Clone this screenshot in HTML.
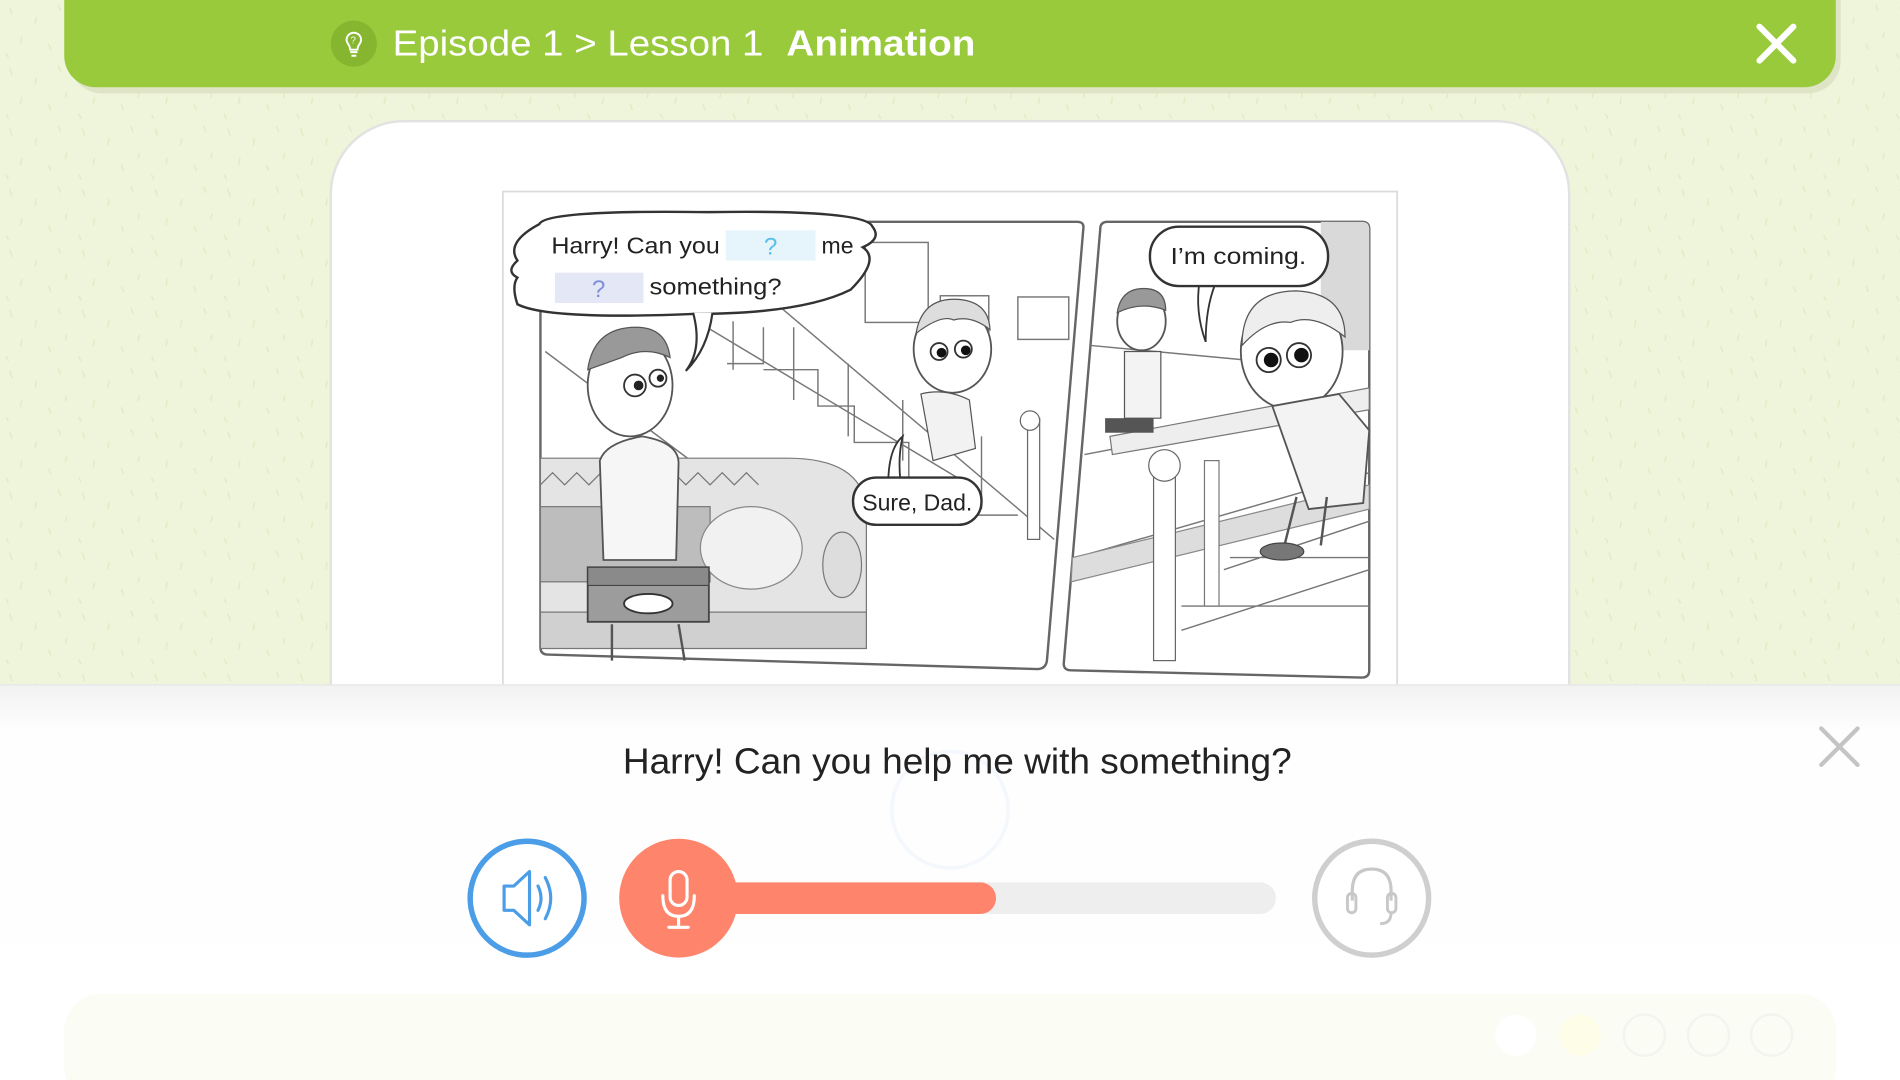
<!DOCTYPE html>
<html><head><meta charset="utf-8">
<style>
html,body{margin:0;padding:0;width:1900px;height:1080px;overflow:hidden;background:#eff5da;}
svg{display:block}
text{font-family:"Liberation Sans",sans-serif}
</style></head>
<body>
<svg width="1900" height="1080" viewBox="0 0 1568 891" preserveAspectRatio="none" xmlns="http://www.w3.org/2000/svg">
<defs>
<pattern id="tex" width="60" height="50" patternUnits="userSpaceOnUse">
<rect width="60" height="50" fill="#eff5da"/>
<path d="M8 6l2 6M30 14l-1 6M48 4l2 5M18 30l-1 6M40 36l2 5M55 26l-1 5M5 44l2 4" stroke="#e2ebc3" stroke-width="1.2"/>
</pattern>
<linearGradient id="ov" x1="0" y1="0" x2="0" y2="1">
<stop offset="0" stop-color="#f2f2f2"/><stop offset="0.12" stop-color="#fefefe"/><stop offset="1" stop-color="#ffffff"/>
</linearGradient>
</defs>
<rect width="1568" height="891" fill="url(#tex)"/>
<!-- header -->
<path d="M57 0H1519V50a27 27 0 0 1-27 27H84a27 27 0 0 1-27-27z" fill="#dfe4c6"/>
<path d="M53 0H1515V46a26 26 0 0 1-26 26H79a26 26 0 0 1-26-26z" fill="#99ca3c"/>
<circle cx="292" cy="36" r="19" fill="#86b52f"/>
<path d="M286 33a6 6 0 1 1 12 0c0 3-3 4-3 8h-6c0-4-3-5-3-8z M289 43h6 M290 46h4" fill="none" stroke="#fff" stroke-width="1.6"/>
<text x="291.5" y="36" font-size="8" fill="#fff" text-anchor="middle">?</text>
<text x="324" y="46" font-size="30" fill="#fff" textLength="306" lengthAdjust="spacingAndGlyphs">Episode 1 &gt; Lesson 1</text>
<text x="649" y="46" font-size="30" fill="#fff" font-weight="bold" textLength="156" lengthAdjust="spacingAndGlyphs">Animation</text>
<path d="M1452 22l28 28M1480 22l-28 28" stroke="#fff" stroke-width="5" stroke-linecap="round"/>
<!-- card -->
<path d="M273 891V160a60 60 0 0 1 60-60H1235a60 60 0 0 1 60 60V891z" fill="#fff" stroke="#e2e2e2" stroke-width="2"/>
<rect x="415" y="158" width="738" height="420" fill="#fff" stroke="#dcdcdc" stroke-width="1.5"/>
<!-- left panel -->
<path d="M452 183H889q6 0 5 6L864 545q-1 7-8 7L452 540q-6 0-6-6V189q0-6 6-6z" fill="#fff" stroke="#666" stroke-width="2"/>
<g stroke="#777" stroke-width="1.2" fill="none">
<path d="M575 265L800 400M640 250L870 445M600 300h30v-30M630 305h45v30h30v30h45v30h45v30h45"/>
<path d="M605 265v40M655 270v60M700 300v60M745 330v50M810 360v60"/>
<rect x="714" y="200" width="52" height="66"/><rect x="840" y="245" width="42" height="35"/><rect x="776" y="244" width="40" height="30"/>
<path d="M450 290L570 380"/>
</g>
<rect x="848" y="345" width="10" height="100" fill="#fff" stroke="#666"/><circle cx="850" cy="347" r="8" fill="#fff" stroke="#666"/>
<path d="M446 378H650q60 0 65 40v90H446z" fill="#e4e4e4" stroke="#777"/>
<rect x="446" y="418" width="140" height="62" fill="#bdbdbd" stroke="#777"/>
<path d="M446 400l10-10 10 10 10-10 10 10 10-10 10 10 10-10 10 10 10-10 10 10 10-10 10 10 10-10 10 10 10-10 10 10 10-10 10 10" stroke="#777" fill="none"/>
<ellipse cx="620" cy="452" rx="42" ry="34" fill="#f1f1f1" stroke="#888"/>
<ellipse cx="695" cy="466" rx="16" ry="27" fill="#ddd" stroke="#777"/>
<path d="M446 505H715v30H446z" fill="#d0d0d0" stroke="#777"/>
<!-- dad -->
<path d="M495 380q5-15 35-20q30 5 30 22l-2 80h-60z" fill="#f6f6f6" stroke="#555" stroke-width="1.5"/>
<ellipse cx="520" cy="318" rx="35" ry="42" fill="#fff" stroke="#555" stroke-width="1.5"/>
<path d="M485 305q5-35 40-35q25 0 28 25q-20-10-40 0z" fill="#999" stroke="#555"/>
<circle cx="524" cy="318" r="9" fill="#fff" stroke="#333" stroke-width="1.5"/><circle cx="527" cy="318" r="4" fill="#222"/>
<circle cx="543" cy="312" r="7" fill="#fff" stroke="#333" stroke-width="1.5"/><circle cx="545" cy="312" r="3" fill="#222"/>
<path d="M505 515v30M560 515l5 30" stroke="#555" stroke-width="2"/>
<rect x="485" y="468" width="100" height="45" fill="#9c9c9c" stroke="#444" stroke-width="1.5"/>
<path d="M485 468h100v15H485z" fill="#8a8a8a" stroke="#444"/>
<ellipse cx="535" cy="498" rx="20" ry="8" fill="#fff" stroke="#333" stroke-width="1.5"/>
<!-- boy on stairs -->
<ellipse cx="786" cy="288" rx="32" ry="36" fill="#fff" stroke="#555" stroke-width="1.5"/>
<path d="M756 275q5-30 35-28q25 2 26 25q-15-12-30-8q-10-5-31 11z" fill="#ddd" stroke="#555"/>
<circle cx="775" cy="290" r="7" fill="#fff" stroke="#333" stroke-width="1.5"/><circle cx="777" cy="291" r="4" fill="#111"/>
<circle cx="795" cy="288" r="7" fill="#fff" stroke="#333" stroke-width="1.5"/><circle cx="797" cy="289" r="4" fill="#111"/>
<path d="M760 325q20-5 40 5l5 40-35 10z" fill="#f2f2f2" stroke="#555"/>
<!-- bubble 1 -->
<path d="M445 185q5-12 140-10q130-2 135 12q8 10-8 17q15 10-10 35q-40 20-130 20q-120 5-145-8q-5-15 0-22q-10-5 0-14q-10-15 18-30z" fill="#fff" stroke="#333" stroke-width="2"/>
<path d="M572 258q8 30-6 48q18-18 22-48" fill="#fff" stroke="#333" stroke-width="1.8"/>
<rect x="599" y="190" width="74" height="25" fill="#e6f4fb"/>
<rect x="458" y="225" width="73" height="25" fill="#e3e7f6"/>
<text x="455" y="209" font-size="19" fill="#222" textLength="139" lengthAdjust="spacingAndGlyphs">Harry! Can you</text>
<text x="636" y="210" font-size="20" fill="#5ac0ea" text-anchor="middle">?</text>
<text x="678" y="209" font-size="19" fill="#222">me</text>
<text x="494" y="245" font-size="20" fill="#7f8fdb" text-anchor="middle">?</text>
<text x="536" y="243" font-size="19" fill="#222" textLength="109" lengthAdjust="spacingAndGlyphs">something?</text>
<!-- sure dad -->
<path d="M745 360q-12 10-12 40l10-4q-2-20 2-36z" fill="#fff" stroke="#333" stroke-width="1.5"/>
<rect x="704" y="394" width="106" height="39" rx="19" fill="#fff" stroke="#333" stroke-width="2"/>
<text x="757" y="421" font-size="19" fill="#222" text-anchor="middle">Sure, Dad.</text>
<!-- right panel -->
<path d="M914 183H1124q6 0 6 6V553q0 6-6 6L884 553q-7 0-6-7L908 189q0-6 6-6z" fill="#fff" stroke="#666" stroke-width="2"/>
<path d="M1090 183h34q6 0 6 6v100h-40z" fill="#d9d9d9"/>
<g stroke="#777" stroke-width="1.2" fill="none">
<path d="M900 285L1060 300M895 375L1130 330M888 460L1130 390M975 520L1130 470M975 500H1130M1010 470L1130 430M1015 460H1130"/>
</g>
<path d="M916 360L1130 320v18L918 375z" fill="#eee" stroke="#777"/>
<path d="M885 460L1130 400v20L884 480z" fill="#ddd" stroke="#888"/>
<rect x="952" y="390" width="18" height="155" fill="#fff" stroke="#666"/><circle cx="961" cy="384" r="13" fill="#fff" stroke="#666"/>
<rect x="994" y="380" width="12" height="120" fill="#fff" stroke="#777"/>
<ellipse cx="942" cy="265" rx="20" ry="24" fill="#fff" stroke="#555" stroke-width="1.5"/>
<path d="M922 258q3-20 22-20q18 0 18 18q-20-8-40 2z" fill="#999" stroke="#555"/>
<path d="M928 290h30v55h-30z" fill="#f3f3f3" stroke="#555"/>
<rect x="912" y="345" width="40" height="12" fill="#555"/>
<ellipse cx="1066" cy="290" rx="42" ry="48" fill="#fff" stroke="#555" stroke-width="1.5"/>
<path d="M1025 285q0-45 45-45q40 2 40 38q-25-20-45-12q-20-3-40 19z" fill="#eee" stroke="#555"/>
<circle cx="1047" cy="297" r="10" fill="#fff" stroke="#333" stroke-width="1.5"/><circle cx="1049" cy="297" r="6" fill="#111"/>
<circle cx="1072" cy="293" r="10" fill="#fff" stroke="#333" stroke-width="1.5"/><circle cx="1074" cy="293" r="6" fill="#111"/>
<path d="M1050 335l55 -10l25 30l-5 60l-45 5z" fill="#f3f3f3" stroke="#555" stroke-width="1.5"/>
<path d="M1070 410l-10 40M1095 410l-5 40" stroke="#555" stroke-width="2"/>
<ellipse cx="1058" cy="455" rx="18" ry="7" fill="#777" stroke="#444"/>
<path d="M990 232q-4 25 5 50q0-28 8-48z" fill="#fff" stroke="#333" stroke-width="1.5"/>
<rect x="949" y="187" width="147" height="49" rx="24" fill="#fff" stroke="#333" stroke-width="2"/>
<text x="1022" y="218" font-size="19" fill="#222" text-anchor="middle" textLength="112" lengthAdjust="spacingAndGlyphs">I’m coming.</text>
<!-- bottom overlay -->
<rect x="0" y="565" width="1568" height="326" fill="url(#ov)"/>
<line x1="0" y1="565" x2="1568" y2="565" stroke="#e6e6e6"/>
<rect x="53" y="820" width="1462" height="90" rx="30" fill="#fbfcf4"/>
<g fill="none" stroke="#f4f4ee" stroke-width="2"><circle cx="1357" cy="854" r="17"/><circle cx="1410" cy="854" r="17"/><circle cx="1462" cy="854" r="17"/></g>
<circle cx="1251" cy="854" r="17" fill="#fff"/><circle cx="1304" cy="854" r="17" fill="#fdfde8"/>
<circle cx="784" cy="668" r="48" fill="none" stroke="#f4f8fd" stroke-width="3"/>
<text x="790" y="638" font-size="30" fill="#222" text-anchor="middle" textLength="552" lengthAdjust="spacingAndGlyphs">Harry! Can you help me with something?</text>
<path d="M1503 601l30 30M1533 601l-30 30" stroke="#c4c4c4" stroke-width="3.5" stroke-linecap="round"/>
<!-- speaker -->
<circle cx="435" cy="741" r="47" fill="#fff" stroke="#4a9de6" stroke-width="4.5"/>
<path d="M416 731h8l13-12v44l-13-12h-8z" fill="none" stroke="#4a9de6" stroke-width="2.6" stroke-linejoin="round"/>
<path d="M444 731q5 10 0 20M450 724q9 17 0 34" fill="none" stroke="#4a9de6" stroke-width="2.6" stroke-linecap="round"/>
<!-- progress -->
<rect x="560" y="728" width="493" height="26" rx="13" fill="#eeeeee"/>
<rect x="560" y="728" width="262" height="26" rx="13" fill="#fe846c"/>
<circle cx="560" cy="741" r="49" fill="#fe846c"/>
<rect x="553" y="719" width="14" height="28" rx="7" fill="none" stroke="#fff" stroke-width="2.6"/>
<path d="M547 739q0 17 13 17q13 0 13-17M560 756v8M552 765h16" fill="none" stroke="#fff" stroke-width="2.6" stroke-linecap="round"/>
<!-- headphone -->
<circle cx="1132" cy="741" r="47" fill="#fff" stroke="#cfcfcf" stroke-width="4.5"/>
<path d="M1116 743v-8q0-18 16-18q16 0 16 18v8" fill="none" stroke="#c8c8c8" stroke-width="2.6"/>
<rect x="1112" y="737" width="7" height="16" rx="3.5" fill="none" stroke="#c8c8c8" stroke-width="2.4"/>
<rect x="1145" y="737" width="7" height="16" rx="3.5" fill="none" stroke="#c8c8c8" stroke-width="2.4"/>
<path d="M1148 753q0 9-9 9" fill="none" stroke="#c8c8c8" stroke-width="2.4"/>
</svg>
</body></html>
